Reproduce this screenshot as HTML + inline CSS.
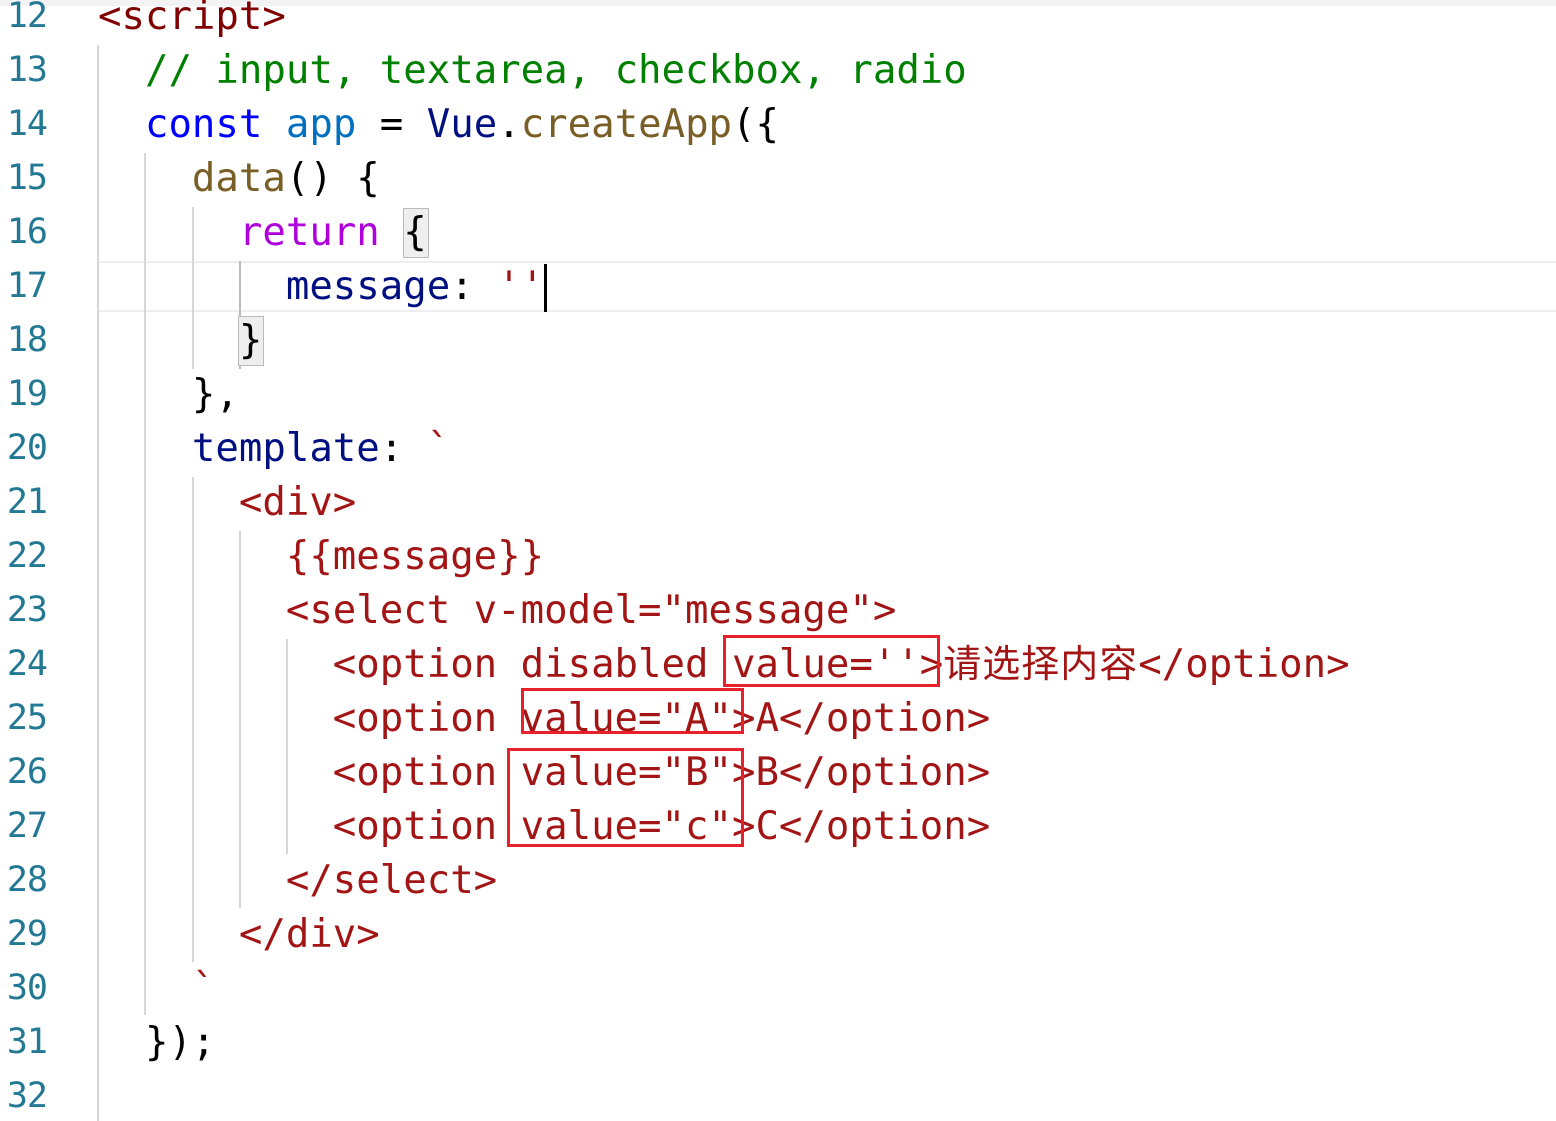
<!DOCTYPE html>
<html><head><meta charset="utf-8"><style>
html,body{margin:0;padding:0;background:#fff;width:1556px;height:1121px;overflow:hidden;position:relative}
.l{position:absolute;left:0;height:54px;line-height:54px;font-family:"DejaVu Sans Mono","Liberation Mono","Noto Sans CJK SC",monospace;font-size:39px;white-space:pre;color:#000}
.n{position:absolute;left:0;width:47px;text-align:right;color:#237893;font-family:"DejaVu Sans Mono",monospace;font-size:35px;letter-spacing:-1px}
.c{position:absolute;left:98px;top:1px}
.t{color:#800000}.cm{color:#008000}.k{color:#0000ff}.v{color:#0070c1}.f{color:#795e26}.r{color:#af00db}.p{color:#001080}.s{color:#a31515}
.g{position:absolute;width:2px;background:#d6d6d6}
.box{position:absolute;border:3px solid #e8202a;box-sizing:border-box}
.cjk{font-family:"Noto Sans CJK SC",sans-serif;font-size:38px;letter-spacing:1px;line-height:0}
</style></head><body>
<div style="position:absolute;left:0;top:0;width:1556px;height:6px;background:#f3f3f3"></div>
<div style="position:absolute;left:98px;top:261px;width:1458px;height:51px;border-top:2px solid #eee;border-bottom:2px solid #eee;box-sizing:border-box"></div>
<div class="g" style="left:97px;top:45px;height:1076px"></div>
<div class="g" style="left:144px;top:153px;height:862px"></div>
<div class="g" style="left:192px;top:207px;height:162px"></div>
<div class="g" style="left:239px;top:261px;height:108px;background:#bbb"></div>
<div class="g" style="left:192px;top:477px;height:485px"></div>
<div class="g" style="left:239px;top:531px;height:377px"></div>
<div class="g" style="left:286px;top:639px;height:215px"></div>
<div style="position:absolute;left:403px;top:208px;width:24px;height:48px;background:#eee;border:1px solid #bbb"></div>
<div style="position:absolute;left:238px;top:316px;width:24px;height:48px;background:#eee;border:1px solid #bbb"></div>
<div style="position:absolute;left:544px;top:264px;width:3px;height:48px;background:#000"></div>

<div class="l" style="top:-11px"><span class="n">12</span><span class="c"><span class="t">&lt;script&gt;</span></span></div>
<div class="l" style="top:43px"><span class="n">13</span><span class="c">  <span class="cm">// input, textarea, checkbox, radio</span></span></div>
<div class="l" style="top:97px"><span class="n">14</span><span class="c">  <span class="k">const</span> <span class="v">app</span> = <span class="p">Vue</span>.<span class="f">createApp</span>({</span></div>
<div class="l" style="top:151px"><span class="n">15</span><span class="c">    <span class="f">data</span>() {</span></div>
<div class="l" style="top:205px"><span class="n">16</span><span class="c">      <span class="r">return</span> {</span></div>
<div class="l" style="top:259px"><span class="n">17</span><span class="c">        <span class="p">message</span>: <span class="s">''</span></span></div>
<div class="l" style="top:313px"><span class="n">18</span><span class="c">      }</span></div>
<div class="l" style="top:367px"><span class="n">19</span><span class="c">    },</span></div>
<div class="l" style="top:421px"><span class="n">20</span><span class="c">    <span class="p">template</span>: <span class="s">`</span></span></div>
<div class="l" style="top:475px"><span class="n">21</span><span class="c"><span class="s">      &lt;div&gt;</span></span></div>
<div class="l" style="top:529px"><span class="n">22</span><span class="c"><span class="s">        {{message}}</span></span></div>
<div class="l" style="top:583px"><span class="n">23</span><span class="c"><span class="s">        &lt;select v-model="message"&gt;</span></span></div>
<div class="l" style="top:637px"><span class="n">24</span><span class="c"><span class="s">          &lt;option disabled value=''&gt;<span class="cjk">请选择内容</span>&lt;/option&gt;</span></span></div>
<div class="l" style="top:691px"><span class="n">25</span><span class="c"><span class="s">          &lt;option value="A"&gt;A&lt;/option&gt;</span></span></div>
<div class="l" style="top:745px"><span class="n">26</span><span class="c"><span class="s">          &lt;option value="B"&gt;B&lt;/option&gt;</span></span></div>
<div class="l" style="top:799px"><span class="n">27</span><span class="c"><span class="s">          &lt;option value="c"&gt;C&lt;/option&gt;</span></span></div>
<div class="l" style="top:853px"><span class="n">28</span><span class="c"><span class="s">        &lt;/select&gt;</span></span></div>
<div class="l" style="top:907px"><span class="n">29</span><span class="c"><span class="s">      &lt;/div&gt;</span></span></div>
<div class="l" style="top:961px"><span class="n">30</span><span class="c"><span class="s">    `</span></span></div>
<div class="l" style="top:1015px"><span class="n">31</span><span class="c">  });</span></div>
<div class="l" style="top:1069px"><span class="n">32</span><span class="c"></span></div>

<div class="box" style="left:723px;top:635px;width:217px;height:52px"></div>
<div class="box" style="left:521px;top:688px;width:223px;height:46px"></div>
<div class="box" style="left:507px;top:748px;width:237px;height:99px"></div>
</body></html>
